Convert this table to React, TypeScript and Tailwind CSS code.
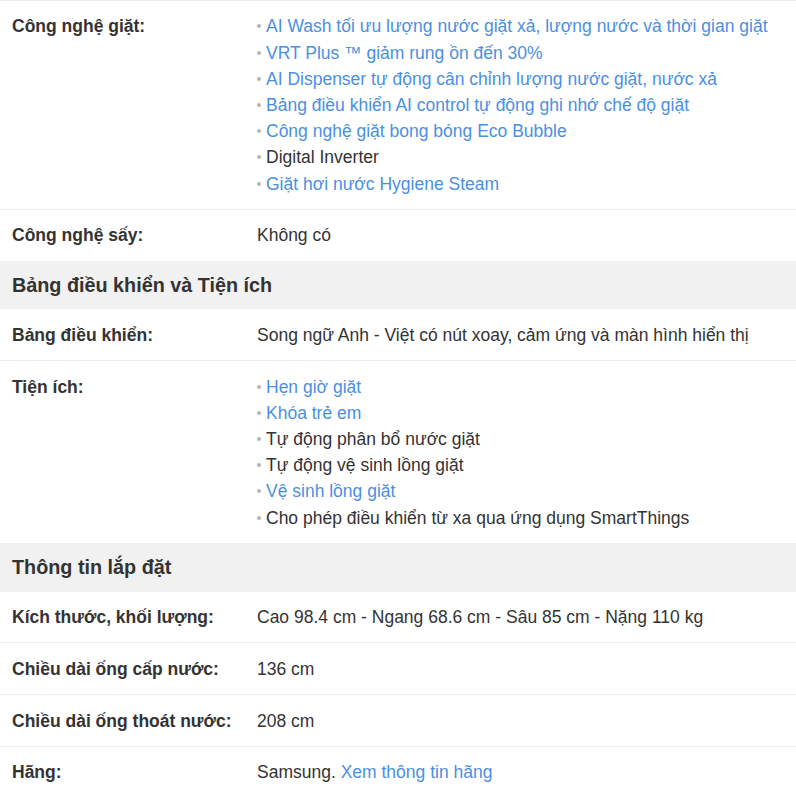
import React from 'react';

type Item = { text: string; link?: boolean };

const wash: Item[] = [
  { text: 'AI Wash tối ưu lượng nước giặt xả, lượng nước và thời gian giặt', link: true },
  { text: 'VRT Plus ™ giảm rung ồn đến 30%', link: true },
  { text: 'AI Dispenser tự động cân chỉnh lượng nước giặt, nước xả', link: true },
  { text: 'Bảng điều khiển AI control tự động ghi nhớ chế độ giặt', link: true },
  { text: 'Công nghệ giặt bong bóng Eco Bubble', link: true },
  { text: 'Digital Inverter' },
  { text: 'Giặt hơi nước Hygiene Steam', link: true },
];

const utils: Item[] = [
  { text: 'Hẹn giờ giặt', link: true },
  { text: 'Khóa trẻ em', link: true },
  { text: 'Tự động phân bổ nước giặt' },
  { text: 'Tự động vệ sinh lồng giặt' },
  { text: 'Vệ sinh lồng giặt', link: true },
  { text: 'Cho phép điều khiển từ xa qua ứng dụng SmartThings' },
];

function Row({ label, children }: { label: string; children: React.ReactNode }) {
  return (
    <div className="flex border-t border-[#eeeeee] py-[12.3px]">
      <div className="w-[257px] shrink-0 pl-[12px] font-bold text-[#333]">{label}</div>
      <div className="flex-1 text-[#333]">{children}</div>
    </div>
  );
}

function List({ items }: { items: Item[] }) {
  return (
    <ul>
      {items.map((it) => (
        <li key={it.text} className="flex items-center">
          <span className="mr-[5px] inline-block h-[4px] w-[4px] shrink-0 rounded-full bg-[#b5b5b5]" />
          <span className={it.link ? 'text-[#4a90e2]' : 'text-[#333]'}>{it.text}</span>
        </li>
      ))}
    </ul>
  );
}

function Header({ title }: { title: string }) {
  return (
    <div className="bg-[#f1f1f1] px-[12px] py-[11.8px] text-[19.8px] leading-[24px] font-bold text-[#333]">
      {title}
    </div>
  );
}

export default function App() {
  return (
    <div className="w-[796px] bg-white text-[17.5px] leading-[26.2px] font-['Liberation_Sans',Arial,sans-serif]">
      <Row label="Công nghệ giặt:">
        <List items={wash} />
      </Row>
      <Row label="Công nghệ sấy:">Không có</Row>

      <Header title="Bảng điều khiển và Tiện ích" />
      <Row label="Bảng điều khiển:">Song ngữ Anh - Việt có nút xoay, cảm ứng và màn hình hiển thị</Row>
      <Row label="Tiện ích:">
        <List items={utils} />
      </Row>

      <Header title="Thông tin lắp đặt" />
      <Row label="Kích thước, khối lượng:">Cao 98.4 cm - Ngang 68.6 cm - Sâu 85 cm - Nặng 110 kg</Row>
      <Row label="Chiều dài ống cấp nước:">136 cm</Row>
      <Row label="Chiều dài ống thoát nước:">208 cm</Row>
      <Row label="Hãng:">
        Samsung. <span className="text-[#4a90e2]">Xem thông tin hãng</span>
      </Row>
    </div>
  );
}
